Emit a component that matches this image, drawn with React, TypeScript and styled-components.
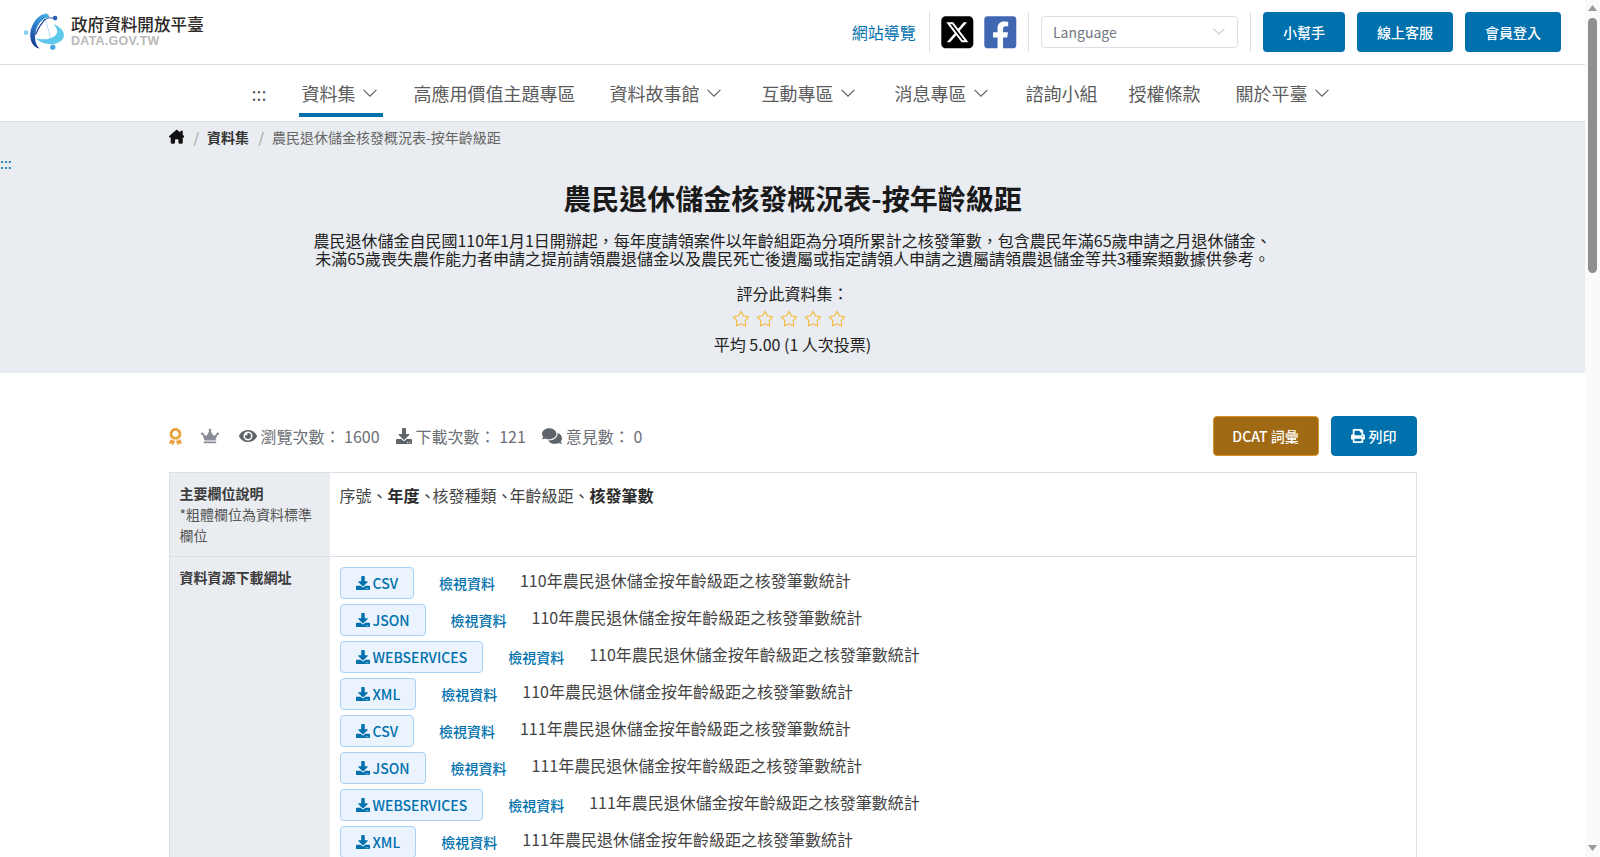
import React from "react";
import styled, { createGlobalStyle } from "styled-components";
import { FaAward, FaCrown, FaEye, FaDownload, FaComments, FaPrint, FaFacebookSquare } from "react-icons/fa";
import { FaSquareXTwitter, FaHouseChimney } from "react-icons/fa6";
import { Star } from "lucide-react";

const Global = createGlobalStyle`
  html { overflow-y: scroll; }
  body {
    margin: 0;
    background: #fff;
    color: #333;
    font-family: "Noto Sans CJK TC", "Noto Sans", sans-serif;
    font-size: 16px;
  }
  a { text-decoration: none; color: inherit; }
`;

const Page = styled.div`
  min-height: 2770px;
  padding-right: 15px;
`;

const ScrollTrack = styled.div`
  position: fixed;
  top: 0;
  right: 0;
  bottom: 0;
  width: 15px;
  background: #fafafa;
`;

const ScrollThumb = styled.div`
  position: absolute;
  top: 18px;
  left: 3px;
  width: 9px;
  height: 255px;
  border-radius: 5px;
  background: #8f8f8f;
`;

const ScrollArrow = styled.svg<{ $bottom?: boolean }>`
  position: absolute;
  left: 3px;
  ${(p) => (p.$bottom ? "bottom: 6px;" : "top: 5px;")}
  fill: #9a9a9a;
`;

const TopBar = styled.header`
  height: 64px;
  display: flex;
  align-items: center;
  justify-content: space-between;
  padding: 0 24px 0 23px;
  border-bottom: 1px solid #dcdfe8;
`;

const Brand = styled.a`
  display: flex;
  align-items: center;
  gap: 5px;
`;

const BrandText = styled.div`
  display: flex;
  flex-direction: column;
  padding-bottom: 3px;
`;

const BrandName = styled.span`
  font-size: 16.6px;
  line-height: 20px;
  font-weight: 500;
  color: #2d2a28;
`;

const BrandSub = styled.span`
  font-family: "Liberation Sans", sans-serif;
  font-size: 12.5px;
  line-height: 14px;
  font-weight: 700;
  color: #b9b9b9;
  letter-spacing: 0.25px;
`;

const TopTools = styled.div`
  display: flex;
  align-items: center;
`;

const SiteMap = styled.a`
  color: #0071ad;
  font-size: 16px;
  margin-right: 13px;
`;

const VDivider = styled.span`
  width: 1px;
  height: 40px;
  background: #dcdfe8;
`;

const SocialGroup = styled.div`
  display: flex;
  align-items: center;
  gap: 7px;
  padding: 0 9px;
`;

const SocialLink = styled.a<{ $color: string }>`
  display: flex;
  color: ${(p) => p.$color};
  line-height: 0;
`;

const LangSelect = styled.div`
  width: 197px;
  height: 32px;
  box-sizing: border-box;
  margin: 0 12px;
  padding: 0 12px 0 11px;
  display: flex;
  align-items: center;
  justify-content: space-between;
  border: 1px solid #dcdfe8;
  border-radius: 4px;
  color: #70757f;
  font-size: 14px;
`;

const TopButton = styled.button<{ $w: number }>`
  width: ${(p) => p.$w}px;
  height: 40px;
  margin-left: 12px;
  border: 0;
  border-radius: 4px;
  background: #0071ad;
  color: #fff;
  font: 500 14px "Noto Sans CJK TC", sans-serif;
`;

const Nav = styled.nav`
  height: 56px;
  display: flex;
  justify-content: center;
  gap: 29px;
  padding-right: 2px;
  border-bottom: 1px solid #dcdfe8;
  color: #5c5c5c;
  font-size: 18px;
`;

const NavItem = styled.a<{ $active?: boolean; $chev?: boolean; $shift?: number }>`
  display: flex;
  align-items: center;
  gap: 7px;
  height: 52px;
  margin-left: ${(p) => p.$shift ?? 0}px;
  padding: 8px ${(p) => (p.$chev ? 6 : 3)}px 0 3px;
  box-sizing: border-box;
  border-bottom: 4px solid ${(p) => (p.$active ? "#0071ad" : "transparent")};
`;

const Banner = styled.section`
  height: 251px;
  background: #e9ecf0;
`;

const Crumbs = styled.div`
  width: 1248px;
  margin: 0 auto;
  height: 30px;
  display: flex;
  align-items: center;
  font-size: 14px;
  color: #666;
`;

const CrumbHome = styled.a`
  display: flex;
  color: #111;
`;

const CrumbSep = styled.span`
  margin: 0 8px 0 9.5px;
  color: #999;
`;

const CrumbStrong = styled.a`
  font-weight: 700;
  color: #333;
`;

const Marker = styled.div`
  height: 20px;
  margin-top: 1px;
  font-size: 14px;
  line-height: 20px;
  color: #0071ad;
`;

const BannerTitle = styled.h1`
  margin: 5px 0 0;
  text-align: center;
  font-size: 28px;
  line-height: 40px;
  font-weight: 700;
  color: #1a1a1a;
`;

const BannerDesc = styled.p`
  margin: 13px 0 0;
  text-align: center;
  font-size: 16px;
  line-height: 18px;
  color: #222;
`;

const RateLabel = styled.div`
  margin-top: 14px;
  text-align: center;
  font-size: 16px;
  line-height: 24px;
  color: #222;
`;

const Stars = styled.div`
  display: flex;
  justify-content: center;
  gap: 6px;
  margin-top: 2px;
  padding-right: 7px;
  height: 24px;
  align-items: center;
  color: #f7b731;
`;

const Average = styled.div`
  margin-top: 1px;
  text-align: center;
  font-size: 16px;
  line-height: 24px;
  color: #222;
`;

const Container = styled.main`
  width: 1248px;
  margin: 0 auto;
`;

const StatsRow = styled.div`
  height: 40px;
  margin-top: 43px;
  display: flex;
  align-items: center;
  justify-content: space-between;
`;

const Stats = styled.div`
  display: flex;
  align-items: center;
  color: #6c6f76;
  font-size: 16px;
`;

const StatIcon = styled.span<{ $color?: string; $ml: number; $mr?: number }>`
  display: flex;
  margin-left: ${(p) => p.$ml}px;
  margin-right: ${(p) => p.$mr ?? 4}px;
  color: ${(p) => p.$color ?? "#5f636a"};
`;

const Actions = styled.div`
  display: flex;
  gap: 12px;
`;

const ActionButton = styled.button<{ $w: number; $bg: string; $border: string }>`
  width: ${(p) => p.$w}px;
  height: 40px;
  display: flex;
  align-items: center;
  justify-content: center;
  gap: 4px;
  border: 1px solid ${(p) => p.$border};
  border-radius: 4px;
  background: ${(p) => p.$bg};
  color: #fff;
  font: 500 14px "Noto Sans CJK TC", sans-serif;
`;

const InfoTable = styled.div`
  margin-top: 16px;
  border: 1px solid #dcdfe8;
  border-bottom: 0;
`;

const InfoRow = styled.div<{ $h?: number }>`
  display: grid;
  grid-template-columns: 160px 1fr;
  min-height: ${(p) => p.$h ?? 0}px;
  border-bottom: 1px solid #dcdfe8;
`;

const InfoLabel = styled.div`
  background: #e9ecf0;
  padding: 10px;
  font-size: 14px;
  line-height: 21px;
  color: #555;
  strong { display: block; color: #3a3a3a; }
`;

const InfoValue = styled.div`
  padding: 10px;
  font-size: 16px;
  line-height: 24px;
  color: #444;
  strong { color: #2a2a2a; }
`;

const Sep = styled.span<{ $tight?: number }>`
  margin-right: ${(p) => p.$tight ?? 0}px;
`;

const FileRow = styled.div`
  display: flex;
  align-items: flex-start;
  height: 32px;
  margin-bottom: 5px;
`;

const FileButton = styled.a`
  display: flex;
  align-items: center;
  gap: 3px;
  height: 32px;
  box-sizing: border-box;
  padding: 0 15px;
  background: #eaf3fe;
  border: 1px solid #a8d2f5;
  border-radius: 4px;
  color: #0071ad;
  font-size: 14px;
  font-weight: 500;
`;

const ViewLink = styled.a`
  margin: 6px 25px 0 25px;
  font-size: 14px;
  line-height: 20px;
  font-weight: 500;
  color: #0071ad;
`;

const FileTitle = styled.span`
  font-size: 16px;
  line-height: 24px;
  margin-top: 1px;
  color: #444;
`;

const Chevron = ({ size = 14, color = "#5c5c5c" }: { size?: number; color?: string }) => (
  <svg width={size} height={size * 0.6} viewBox="0 0 14 8.4" fill="none" stroke={color} strokeWidth="1.1" aria-hidden="true">
    <polyline points="0.6,0.8 7,7.2 13.4,0.8" />
  </svg>
);

const Logo = () => (
  <svg width="43" height="40" viewBox="8 10 130 120" aria-hidden="true">
    <defs>
      <linearGradient id="lg1" x1="0.7" y1="0" x2="0.3" y2="1">
        <stop offset="0" stopColor="#4aa9e2" />
        <stop offset="0.5" stopColor="#2a78c8" />
        <stop offset="1" stopColor="#17398f" />
      </linearGradient>
    </defs>
    <path d="M78 14 C55 16 32 45 30 75 C29 98 38 116 58 120 C46 108 42 92 46 72 C50 50 62 30 88 24 C86 19 83 15 78 14Z" fill="url(#lg1)" />
    <path d="M100 30 C92 25 82 26 74 34" fill="none" stroke="#1b4fa5" strokeWidth="3" />
    <path d="M74 32 C62 46 52 62 46 78" fill="none" stroke="#17398f" strokeWidth="3.5" />
    <path d="M76 34 C84 58 90 84 96 108" fill="none" stroke="#8ad0ef" strokeWidth="2" />
    <path d="M46 88 C70 114 122 112 131 85 C136 68 118 54 100 46 C113 60 116 72 104 82 C92 92 65 96 46 88Z" fill="#5cc8ec" />
    <circle cx="105" cy="28" r="7" fill="#2c5fb3" />
    <circle cx="17" cy="72" r="7" fill="#86d0f0" />
    <circle cx="98" cy="116" r="8" fill="#4aa5e0" />
  </svg>
);

const navItems: { label: string; chev?: boolean; active?: boolean; shift?: number }[] = [
  { label: "資料集", chev: true, active: true },
  { label: "高應用價值主題專區", shift: -1 },
  { label: "資料故事館", chev: true, shift: -1 },
  { label: "互動專區", chev: true, shift: 3 },
  { label: "消息專區", chev: true, shift: 2 },
  { label: "諮詢小組" },
  { label: "授權條款", shift: -4 },
  { label: "關於平臺", chev: true },
];

const files = ["110", "111"].flatMap((y) =>
  ["CSV", "JSON", "WEBSERVICES", "XML"].map((f) => ({ y, f }))
);

export default function App() {
  return (
    <Page>
      <Global />
      <TopBar>
        <Brand href="#">
          <Logo />
          <BrandText>
            <BrandName>政府資料開放平臺</BrandName>
            <BrandSub>DATA.GOV.TW</BrandSub>
          </BrandText>
        </Brand>
        <TopTools>
          <SiteMap href="#">網站導覽</SiteMap>
          <VDivider />
          <SocialGroup>
            <SocialLink href="#" $color="#000">
              <FaSquareXTwitter size={36.6} />
            </SocialLink>
            <SocialLink href="#" $color="#4267b2">
              <FaFacebookSquare size={36.6} />
            </SocialLink>
          </SocialGroup>
          <VDivider />
          <LangSelect>
            Language
            <Chevron size={12} color="#a9adb6" />
          </LangSelect>
          <VDivider />
          <TopButton $w={82}>小幫手</TopButton>
          <TopButton $w={96}>線上客服</TopButton>
          <TopButton $w={96}>會員登入</TopButton>
        </TopTools>
      </TopBar>
      <Nav>
        <NavItem href="#">:::</NavItem>
        {navItems.map((n) => (
          <NavItem key={n.label} href="#" $active={n.active} $chev={n.chev} $shift={n.shift}>
            {n.label}
            {n.chev && <Chevron />}
          </NavItem>
        ))}
      </Nav>
      <Banner>
        <Crumbs>
          <CrumbHome href="#"><FaHouseChimney size={15.5} /></CrumbHome>
          <CrumbSep>/</CrumbSep>
          <CrumbStrong href="#">資料集</CrumbStrong>
          <CrumbSep>/</CrumbSep>
          農民退休儲金核發概況表-按年齡級距
        </Crumbs>
        <Marker>:::</Marker>
        <BannerTitle>農民退休儲金核發概況表-按年齡級距</BannerTitle>
        <BannerDesc>
          農民退休儲金自民國110年1月1日開辦起，每年度請領案件以年齡組距為分項所累計之核發筆數，包含農民年滿65歲申請之月退休儲金、
          <br />
          未滿65歲喪失農作能力者申請之提前請領農退儲金以及農民死亡後遺屬或指定請領人申請之遺屬請領農退儲金等共3種案類數據供參考。
        </BannerDesc>
        <RateLabel>評分此資料集：</RateLabel>
        <Stars>
          {[0, 1, 2, 3, 4].map((i) => (
            <Star key={i} size={18} strokeWidth={1.4} />
          ))}
        </Stars>
        <Average>平均 5.00 (1 人次投票)</Average>
      </Banner>
      <Container>
        <StatsRow>
          <Stats>
            <StatIcon $color="#e9a23b" $ml={-2}><FaAward size={17} /></StatIcon>
            <StatIcon $color="#8b8e98" $ml={13}><FaCrown size={18} /></StatIcon>
            <StatIcon $ml={16}><FaEye size={18} /></StatIcon>
            瀏覽次數： 1600
            <StatIcon $ml={16}><FaDownload size={16} /></StatIcon>
            下載次數： 121
            <StatIcon $ml={16}><FaComments size={20} /></StatIcon>
            意見數： 0
          </Stats>
          <Actions>
            <ActionButton $w={106} $bg="#a06a14" $border="#d9932a">DCAT 詞彙</ActionButton>
            <ActionButton $w={86} $bg="#0071ad" $border="#0071ad"><FaPrint size={14} />列印</ActionButton>
          </Actions>
        </StatsRow>
        <InfoTable>
          <InfoRow $h={83}>
            <InfoLabel>
              <strong>主要欄位說明</strong>
              *粗體欄位為資料標準欄位
            </InfoLabel>
            <InfoValue>
              序號、<strong>年度</strong><Sep $tight={-3}>、</Sep>核發種類<Sep $tight={-3}>、</Sep>年齡級距<Sep>、</Sep><strong>核發筆數</strong>
            </InfoValue>
          </InfoRow>
          <InfoRow>
            <InfoLabel>
              <strong>資料資源下載網址</strong>
            </InfoLabel>
            <InfoValue>
              {files.map(({ y, f }) => (
                <FileRow key={y + f}>
                  <FileButton href="#"><FaDownload size={14} />{f}</FileButton>
                  <ViewLink href="#">檢視資料</ViewLink>
                  <FileTitle>{y}年農民退休儲金按年齡級距之核發筆數統計</FileTitle>
                </FileRow>
              ))}
            </InfoValue>
          </InfoRow>
        </InfoTable>
      </Container>
      <ScrollTrack>
        <ScrollArrow width="9" height="6" viewBox="0 0 9 6"><polygon points="4.5,0 9,6 0,6" /></ScrollArrow>
        <ScrollThumb />
        <ScrollArrow $bottom width="9" height="6" viewBox="0 0 9 6"><polygon points="0,0 9,0 4.5,6" /></ScrollArrow>
      </ScrollTrack>
    </Page>
  );
}
